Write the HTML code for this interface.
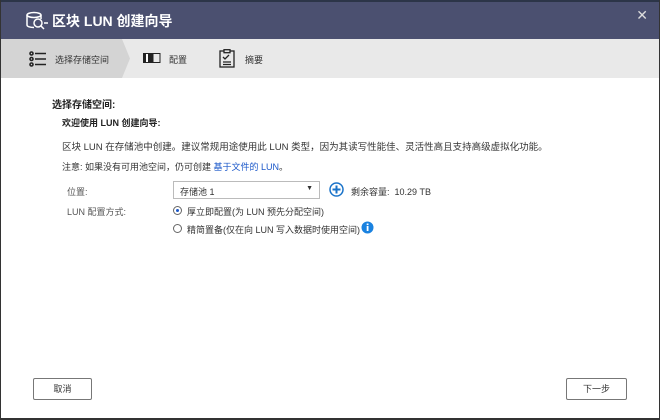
<!DOCTYPE html>
<html><head><meta charset="utf-8"><style>
*{margin:0;padding:0;box-sizing:border-box}
body{width:660px;height:420px;overflow:hidden;background:#fff;font-family:"Liberation Sans","Noto Sans CJK SC",sans-serif;font-size:9px;color:#333;position:relative}
.frame{position:absolute;left:0;top:0;width:660px;height:420px;border:1px solid #333;border-top:none;border-bottom:2px solid #333}
.title{position:absolute;left:0;top:0;width:660px;height:39px;background:#4b5070;border-top:2px solid #2c3548}
.title .t{position:absolute;left:52px;top:9px;color:#fff;font-size:14px;font-weight:bold}
.tabs{position:absolute;left:0;top:39px;width:660px;height:39px;background:#e9e9e9}
.a{position:absolute;left:0;top:0;width:130px;height:39px;background:#d4d4d4;clip-path:polygon(0 0,122px 0,130px 19.5px,122px 39px,0 39px)}
.tx{position:absolute;top:14px;font-size:9px;color:#333}
.p{position:absolute;white-space:nowrap}
.b{font-weight:bold;color:#222}
.btn{position:absolute;top:378px;height:22px;border:1px solid #777;border-radius:2px;background:#fff;text-align:center;line-height:20px;font-size:9px}
.rad{position:absolute;width:9px;height:9px;border:1px solid #666;border-radius:50%;left:173px}
</style></head><body>
<div class="title">
<svg style="position:absolute;left:25px;top:9px" width="24" height="20" viewBox="0 0 24 20" fill="none" stroke="#fff" stroke-width="1.5"><ellipse cx="9" cy="4" rx="7" ry="2.5"/><path d="M2 4v10c0 1.5 3 2.5 7 2.5M16 4v4"/><circle cx="13" cy="12" r="4"/><path d="M16 15l3 3M19 12h4"/></svg>
<div class="t">区块 LUN 创建向导</div>
<div style="position:absolute;right:12px;top:5px;color:#ddd;font-size:14px">✕</div>
</div>
<div class="tabs">
<div class="a"></div>
<svg style="position:absolute;left:29px;top:12px" width="18" height="16" viewBox="0 0 18 16" stroke="#222" stroke-width="1.6" fill="none"><circle cx="2.5" cy="2.5" r="1.5"/><circle cx="2.5" cy="8" r="1.5"/><circle cx="2.5" cy="13.5" r="1.5"/><path d="M6 2.5h11M6 8h11M6 13.5h11"/></svg>
<div class="tx" style="left:55px">选择存储空间</div>
<svg style="position:absolute;left:143px;top:14px" width="18" height="10"><rect x="0" y="0" width="10" height="10" fill="#222"/><rect x="3" y="1" width="2" height="8" fill="#fff"/><rect x="10" y="0.5" width="7" height="9" fill="none" stroke="#222"/></svg>
<div class="tx" style="left:169px">配置</div>
<svg style="position:absolute;left:219px;top:10px" width="16" height="19" fill="none" stroke="#222" stroke-width="1.3"><rect x="1" y="2" width="14" height="16"/><rect x="5" y="0.7" width="6" height="3" fill="#e9e9e9"/><path d="M4 8l2 2 4-4M4 13h8M4 15.5h8"/></svg>
<div class="tx" style="left:245px">摘要</div>
</div>
<div class="p b" style="left:52px;top:96px;font-size:10px">选择存储空间:</div>
<div class="p b" style="left:62px;top:116px">欢迎使用 LUN 创建向导:</div>
<div class="p" style="left:62px;top:139px;font-size:9.5px">区块 LUN 在存储池中创建。建议常规用途使用此 LUN 类型，因为其读写性能佳、灵活性高且支持高级虚拟化功能。</div>
<div class="p" style="left:62px;top:160px">注意: 如果没有可用池空间，仍可创建 <span style="color:#1a57c9">基于文件的 LUN</span>。</div>
<div class="p" style="left:67px;top:185px;color:#555">位置:</div>
<div style="position:absolute;left:173px;top:181px;width:147px;height:18px;border:1px solid #bbb;background:#fff"><span style="position:absolute;left:6px;top:3px">存储池 1</span><span style="position:absolute;right:6px;top:3px;font-size:7px">▼</span></div>
<svg style="position:absolute;left:329px;top:182px" width="15" height="15"><circle cx="7.5" cy="7.5" r="6.5" fill="#fff" stroke="#1a73c9" stroke-width="1.5"/><path d="M7.5 3.5v8M3.5 7.5h8" stroke="#1a73c9" stroke-width="2"/></svg>
<div class="p" style="left:351px;top:185px">剩余容量:&nbsp; 10.29 TB</div>
<div class="p" style="left:67px;top:205px;color:#555">LUN 配置方式:</div>
<div class="rad" style="top:206px"><div style="position:absolute;left:2px;top:2px;width:3px;height:3px;border-radius:50%;background:#1a57c9"></div></div>
<div class="p" style="left:187px;top:205px">厚立即配置(为 LUN 预先分配空间)</div>
<div class="rad" style="top:224px"></div>
<div class="p" style="left:187px;top:223px">精简置备(仅在向 LUN 写入数据时使用空间)</div>
<svg style="position:absolute;left:361px;top:221px" width="13" height="13"><circle cx="6.5" cy="6.5" r="6" fill="#1a82e0"/><rect x="5.7" y="5" width="1.8" height="5" fill="#fff"/><rect x="5.7" y="2.5" width="1.8" height="1.6" fill="#fff"/></svg>
<div class="btn" style="left:33px;width:59px">取消</div>
<div class="btn" style="left:566px;width:61px">下一步</div>
<div class="frame"></div>
</body></html>
